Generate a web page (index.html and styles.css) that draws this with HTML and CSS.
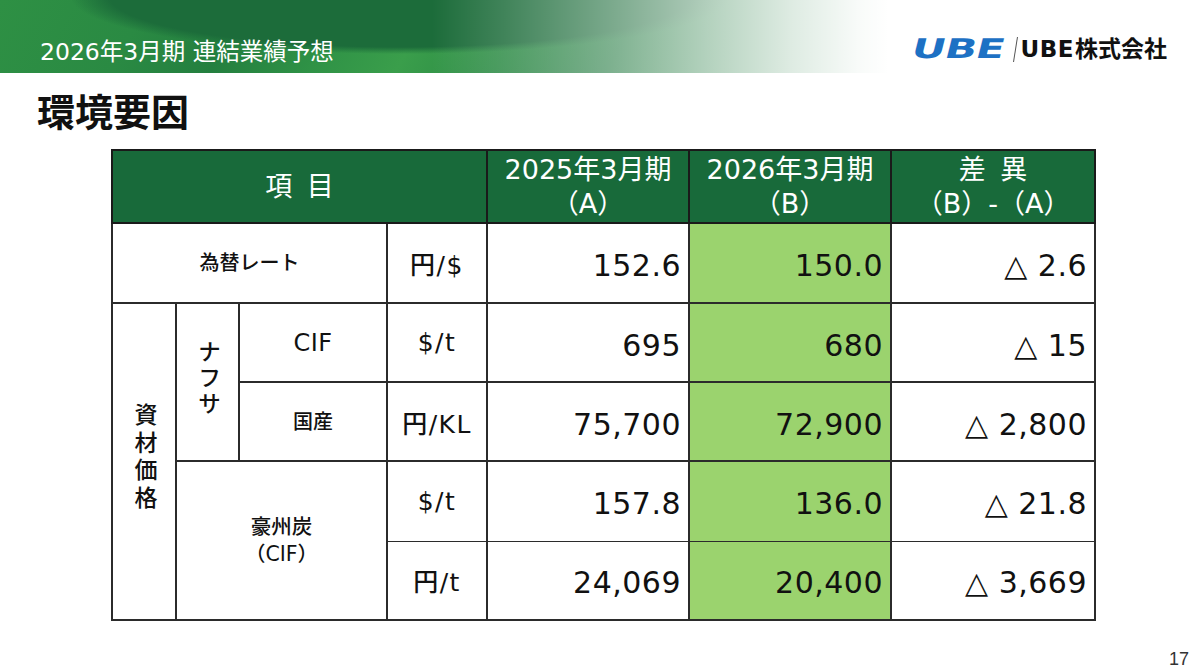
FILE: index.html
```html
<!DOCTYPE html>
<html lang="ja">
<head>
<meta charset="utf-8">
<title>環境要因</title>
<link rel="stylesheet" href="styles.css">
</head>
<body>
<div class="slide">
  <header class="banner">
    <div class="section-title">2026年3月期 連結業績予想</div>
    <div class="logo">
      <span class="logo-mark"><span class="logo-mark-text">UBE</span></span>
      <span class="logo-slash"></span>
      <span class="logo-name"><span class="logo-latin">UBE</span>株式会社</span>
    </div>
  </header>

  <h1 class="page-title">環境要因</h1>

  <table class="env">
    <colgroup>
      <col class="c1"><col class="c2"><col class="c3"><col class="c4"><col class="c5"><col class="c6"><col class="c7">
    </colgroup>
    <thead>
      <tr class="r-head">
        <th colspan="4" class="spaced">項 目</th>
        <th>2025年3月期<br>（A）</th>
        <th>2026年3月期<br>（B）</th>
        <th><span class="spaced">差 異</span><br>（B）-（A）</th>
      </tr>
    </thead>
    <tbody>
      <tr class="r1">
        <td colspan="3" class="label">為替レート</td>
        <td class="unit">円/$</td>
        <td class="num">152.6</td>
        <td class="num hl">150.0</td>
        <td class="num diff">△ 2.6</td>
      </tr>
      <tr class="r2">
        <td rowspan="4" class="label"><span class="vert v1">資材価格</span></td>
        <td rowspan="2" class="label"><span class="vert v2">ナフサ</span></td>
        <td class="label latin">CIF</td>
        <td class="unit">$/t</td>
        <td class="num">695</td>
        <td class="num hl">680</td>
        <td class="num diff">△ 15</td>
      </tr>
      <tr class="r3">
        <td class="label">国産</td>
        <td class="unit">円/KL</td>
        <td class="num">75,700</td>
        <td class="num hl">72,900</td>
        <td class="num diff">△ 2,800</td>
      </tr>
      <tr class="r4">
        <td rowspan="2" colspan="2" class="label coal">豪州炭<br>（CIF）</td>
        <td class="unit thin-b">$/t</td>
        <td class="num thin-b">157.8</td>
        <td class="num hl thin-b">136.0</td>
        <td class="num diff thin-b">△ 21.8</td>
      </tr>
      <tr class="r5">
        <td class="unit thin-t">円/t</td>
        <td class="num thin-t">24,069</td>
        <td class="num hl thin-t">20,400</td>
        <td class="num diff thin-t">△ 3,669</td>
      </tr>
    </tbody>
  </table>

  <footer class="page-no">17</footer>
</div>
</body>
</html>
```

FILE: styles.css
```css
html, body {
  margin: 0;
  padding: 0;
  background: #ffffff;
}

body {
  font-family: "DejaVu Sans", "Noto Sans CJK JP", sans-serif;
  color: #111111;
}

.slide {
  width: 1200px;
  height: 669px;
  display: flex;
  flex-direction: column;
  overflow: hidden;
}

/* ---------- top banner ---------- */
.banner {
  height: 73px;
  box-sizing: border-box;
  padding: 38px 33px 0 40px;
  display: flex;
  justify-content: space-between;
  align-items: flex-start;
  flex-shrink: 0;
  background:
    linear-gradient(90deg,
      rgba(255,255,255,0) 0%,
      rgba(255,255,255,0) 36%,
      rgba(255,255,255,0.16) 42%,
      rgba(255,255,255,0.42) 51%,
      rgba(255,255,255,0.66) 59%,
      rgba(255,255,255,0.85) 66%,
      rgba(255,255,255,0.97) 71.5%,
      #ffffff 74%),
    radial-gradient(ellipse 330px 58px at 400px -4px,
      #1c6c3a 0%, #1c6c3a 88%, rgba(28,108,58,0) 100%),
    linear-gradient(118deg,
      #2e9044 0%, #2a8a43 12%, #247f3f 20%, #2f9246 28%,
      #3a9e4b 35%, #2c8b45 43%, #21793f 52%, #2a8646 100%);
}

.section-title {
  color: #ffffff;
  font-size: 23.5px;
  line-height: 28px;
  white-space: nowrap;
}

.logo {
  display: flex;
  align-items: center;
  height: 24px;
  margin-top: -1px;
}

.logo-mark {
  display: inline-block;
  width: 94px;
  height: 24px;
  line-height: 24px;
  margin-left: -5px;
}

.logo-mark-text {
  display: inline-block;
  color: #1d71c4;
  font-family: "DejaVu Sans", sans-serif;
  font-weight: bold;
  font-size: 27px;
  line-height: 24px;
  transform-origin: left center;
  transform: skewX(-14deg) scaleX(1.55);
  letter-spacing: -0.5px;
}

.logo-slash {
  display: inline-block;
  width: 0;
  height: 25px;
  border-left: 1.5px solid #555555;
  transform: skewX(-9deg);
  margin-left: 9px;
  margin-right: 5px;
}

.logo-name {
  font-size: 23px;
  line-height: 24px;
  font-weight: bold;
  color: #111111;
  white-space: nowrap;
}

.logo-latin {
  font-family: "DejaVu Sans", sans-serif;
  letter-spacing: 0.5px;
  margin-right: 1px;
}

/* ---------- page title ---------- */
.page-title {
  margin: 18px 0 0 37px;
  font-size: 38px;
  line-height: 44px;
  font-weight: bold;
  color: #111111;
}

/* ---------- table ---------- */
.env {
  border-collapse: collapse;
  table-layout: fixed;
  width: 983px;
  margin: 14px 0 0 111px;
}

.c1 { width: 64px; }
.c2 { width: 63px; }
.c3 { width: 148px; }
.c4 { width: 100px; }
.c5 { width: 202px; }
.c6 { width: 202px; }
.c7 { width: 204px; }

.env th,
.env td {
  border: 2px solid #2b2b2b;
  padding: 0;
  vertical-align: middle;
}

.env th {
  background: #186a3a;
  color: #ffffff;
  font-weight: normal;
  font-size: 27px;
  line-height: 34px;
  text-align: center;
  border-color: #1a1a1a;
}

.spaced {
  word-spacing: 6px;
}

.r-head { height: 73px; }
.r1 { height: 80px; }
.r2 { height: 79px; }
.r3 { height: 79px; }
.r4 { height: 80px; }
.r5 { height: 79px; }

.env td.label {
  text-align: center;
  font-size: 20px;
  line-height: 28px;
  font-weight: 500;
}

.env td.latin {
  font-size: 24px;
  letter-spacing: 0.5px;
}

.env td.coal {
  font-size: 20.5px;
  line-height: 27px;
}

.vert {
  display: inline-block;
  writing-mode: vertical-rl;
  text-orientation: upright;
  font-size: 23px;
  line-height: 28px;
  font-weight: 500;
}

.v1 { letter-spacing: 4.5px; }
.v2 { letter-spacing: 3px; }

.env td.unit {
  text-align: center;
  font-size: 25px;
  letter-spacing: 1.5px;
  font-weight: 500;
}

.env td.num {
  text-align: right;
  font-size: 30px;
  letter-spacing: 0.5px;
  padding: 5px 7px 0 0;
  white-space: nowrap;
}

.env td.diff {
  padding-right: 7px;
}

.env td.hl {
  background: #9bd36e;
}

.env td.thin-b { border-bottom-width: 1px; }
.env td.thin-t { border-top-width: 1px; }

/* ---------- footer ---------- */
.page-no {
  margin-top: auto;
  text-align: right;
  padding: 0 11px 1px 0;
  font-family: "Liberation Sans", Arial, sans-serif;
  font-size: 18px;
  line-height: 18px;
  color: #333333;
}
```
